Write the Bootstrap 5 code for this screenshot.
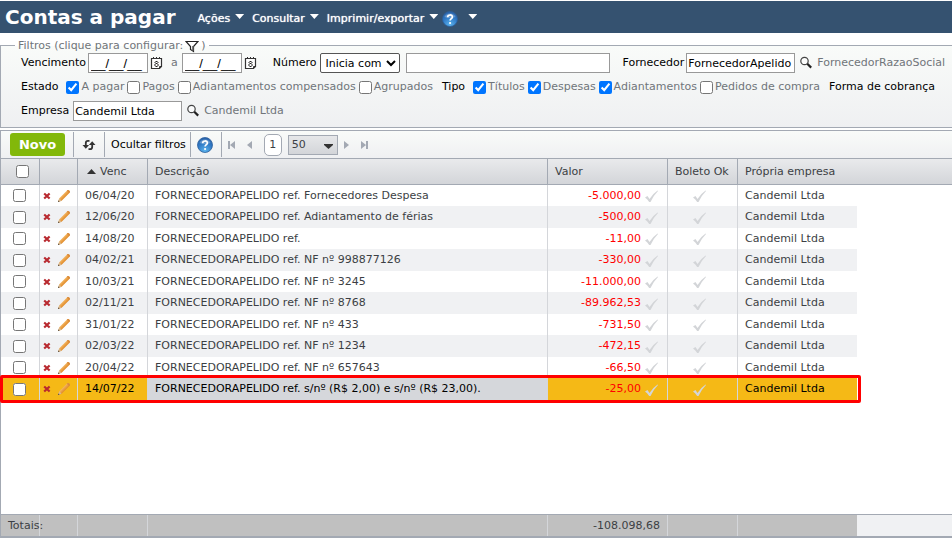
<!DOCTYPE html>
<html lang="pt-BR">
<head>
<meta charset="utf-8">
<meta name="viewport" content="width=device-width, initial-scale=1">
<title>Contas a pagar</title>
<link href="https://cdn.jsdelivr.net/npm/bootstrap@5.3.0/dist/css/bootstrap.min.css" rel="stylesheet">
<style>
:root{--line:#a3a9b3;--soft:#d4d6da;--ink:#3c3f44}
body{font-family:"DejaVu Sans",Verdana,sans-serif;font-size:11px;line-height:14px;color:var(--ink);background:#fff}
svg{display:block;flex:none}
input[type=checkbox]{width:13px;height:13px;margin:0;flex:none;display:block}
.topbar{background:#355270;height:32px;margin-top:1px;padding-left:5px;color:#fff}
.topbar h1{font-size:20px;line-height:28px;font-weight:700;margin:0 22px 0 0}
.menu-item,.plain{background:none;border:0;padding:0;color:inherit;font-size:11px;line-height:14px}
.menu-item{display:flex;align-items:center;gap:5px;margin-right:8px;padding-top:3px;text-shadow:0 0 1px #fff}
.menu-help{gap:10px}
.caret{width:9px;height:5px;background:#fff;clip-path:polygon(0 0,100% 0,50% 100%);margin-bottom:4px}
.filters{margin:4px 0 0;border:1px solid var(--line);border-right:0;padding:0 0 6px 20px;background:linear-gradient(#f9fbf9,#eff0f2);color:#70757a;min-width:0}
.filters legend{float:none;width:auto;margin:0 0 0 -6px;padding:2px 3px 0;font-size:11px;line-height:14px;height:16px}
.caption{color:#000}
.rows{display:flex;flex-direction:column;gap:7px}
.box{height:20px;border:1px solid #999;background:#fff;color:#000;font-size:11px;line-height:14px;padding:0 1px;border-radius:0;flex:none}
.date{width:60px;font-family:"Liberation Sans",Arial,sans-serif;font-size:13px;padding:0 2px}
.name{width:109px}
.number{width:204px}
select.box{width:80px;border-color:#555;border-radius:2px;padding:0}
.opt{display:flex;align-items:center;gap:2px;margin-right:3px}
.g2{margin-left:2px}
.g6{margin-left:6px}
.g12{margin-left:12px}
.grid{margin-top:2px;border-left:1px solid var(--line)}
.tools{height:29px;border-top:1px solid var(--line);border-bottom:1px solid var(--line);background:linear-gradient(#f9fbf9,#eff0f2);color:#000;padding-left:9px}
.novo{background:#82b80a;color:#fff;border:0;border-radius:3px;width:55px;height:23px;font-size:13px;line-height:14px;font-weight:700;padding:0}
.sep{width:1px;height:25px;background:var(--line)}
.page-now{width:18px;height:22px;border:1px solid var(--line);border-radius:5px;background:#fff;color:var(--ink);text-align:center}
.size select{appearance:none;width:50px;height:20px;border:1px solid var(--line);background:linear-gradient(#e6e7e9,#d3d5d9);color:var(--ink);padding:0 3px;border-radius:0;font-size:11px;line-height:14px;display:block}
.size svg{position:absolute;right:5px;top:9px;pointer-events:none}
.ledger{table-layout:fixed;width:100%;border-collapse:separate;border-spacing:0}
.ledger th,.ledger td{padding:0 7px;white-space:nowrap;font-weight:400;vertical-align:middle}
.ledger th{height:26px;border-bottom:1px solid var(--line);border-right:1px solid var(--line);background:linear-gradient(#e9eaec,#d3d5d9)}
.ledger td{height:21px;border-right:1px solid var(--soft)}
.ledger tr:nth-child(even) td{height:22px;background:#f0f1f3}
.ledger th:nth-child(n+7),.ledger td:nth-child(n+7){border-right:0}
.ledger tbody td:last-child{background:none!important}
.ledger .c-pick{padding:0 0 0 12px}
.ledger th.c-pick{padding-left:15px}
.ledger .c-act{padding:0 0 0 3px}
.ledger .c-act span{gap:6px}
.ledger .c-val{padding-right:9px}
.ledger .c-ok{padding-right:14px}
.ledger svg.tick{margin-top:2px}
.minus{color:#f00}
.ledger tr.chosen td{background:#f5b916;color:#000}
.ledger tr.chosen td:nth-child(4){background:#d5d7db}
.chosen{position:relative}
.chosen td:first-child::after{content:"";position:absolute;left:-1px;top:-3px;width:861px;bottom:-3px;border:3px solid #f00;border-radius:2px;pointer-events:none}
.totals{border-top:1px solid var(--line);border-bottom:2px solid var(--line)}
.totals .ledger td{background:#c0c0c0;height:21px}
.totals .ledger td:last-child{background:#f0f1f3!important}
</style>
<script src="https://cdn.jsdelivr.net/npm/bootstrap@5.3.0/dist/js/bootstrap.bundle.min.js"></script>
</head>
<body class="d-flex flex-column min-vh-100 text-nowrap overflow-x-hidden">
<svg width="0" height="0" class="position-absolute" aria-hidden="true">
  <defs>
    <radialGradient id="ball" cx=".5" cy=".9" r=".9"><stop offset="0" stop-color="#5cb4ee"/><stop offset=".6" stop-color="#2f78c4"/><stop offset="1" stop-color="#2a62a8"/></radialGradient>
    <linearGradient id="wood" x1="0" y1="0" x2="1" y2="1"><stop offset=".35" stop-color="#f8c070"/><stop offset=".6" stop-color="#e08a28"/></linearGradient>
  </defs>
  <symbol id="help" viewBox="0 0 16 16"><circle cx="8" cy="8" r="7.5" fill="url(#ball)" stroke="#2c5f9c" stroke-width=".8"/><path d="M2.5 6a5.7 4.8 0 0 1 11 0Q8 8 2.5 6" fill="#fff" opacity=".25"/><path d="M5.6 6.3C5.7 3.2 10.5 3.3 10.4 6c0 1.7-2.3 1.7-2.3 3.6" fill="none" stroke="#fff" stroke-width="1.7"/><circle cx="8.1" cy="12" r="1.1" fill="#fff"/></symbol>
  <symbol id="cal" viewBox="0 0 13 14"><path d="M1.500 2.500h10v8l-2 2h-8z" fill="#fff" stroke="#333" stroke-width="1.200"/><path d="M3.500 1v2M6.500 1v2M9.500 1v2" stroke="#333"/><path d="M11.500 10.500h-2v2" stroke="#333" fill="none"/><path d="M5.500 5h2v1h1v1h-1v1h1v2h-1v1h-2v-1h-1V8h1V7h-1V6h1zM5.500 6v1h2V6zM5.500 8v2h2V8z" fill="#222" fill-rule="evenodd"/></symbol>
  <symbol id="lens" viewBox="0 0 14 14"><circle cx="5.500" cy="5" r="3.700" fill="#fff" fill-opacity=".6" stroke="#444" stroke-width="1.200"/><path d="M8.300 7.700l3.900 3.900" stroke="#222" stroke-width="2.200"/></symbol>
  <symbol id="cross" viewBox="0 0 8 8"><path d="M1.200 1.500l5.400 5M6.600 1.500l-5.400 5" stroke="#b8292f" stroke-width="2.200"/></symbol>
  <symbol id="pencil" viewBox="0 0 14 14"><path d="M1 13l1.300-3.700 8-8q.8-.7 1.700.2l.6.600q.8.900 0 1.700l-8 8z" fill="url(#wood)"/><path d="M1 13l1.300-3.700 2.300 2.500z" fill="#d9b78c"/><path d="M1 13l.5-1.500 1 1z" fill="#333"/><path d="M9.800 1.800l.9-.8q.8-.3 1.500.4.900.8.700 1.700l-.8 1z" fill="#d98a3c"/></symbol>
  <symbol id="tick" viewBox="0 0 13 13"><path d="M0 7.500L2.500 6l2 3Q8 3.500 12.600.5L13 1Q8.500 5.500 5.500 12H4.200Q2.500 9 0 7.500z" fill="#d3d5d8"/></symbol>
</svg>

<nav class="topbar d-flex align-items-center">
  <h1>Contas a pagar</h1>
  <button class="menu-item" type="button">Ações <span class="caret"></span></button>
  <button class="menu-item" type="button">Consultar <span class="caret"></span></button>
  <button class="menu-item me-1" type="button">Imprimir/exportar <span class="caret"></span></button>
  <button class="menu-item menu-help" type="button" aria-label="Ajuda"><svg width="16" height="16"><use href="#help"/></svg><span class="caret"></span></button>
</nav>

<fieldset class="filters">
  <legend class="d-flex align-items-center">Filtros (clique para configurar:
    <svg class="g2" width="14" height="13" viewBox="0 0 14 13"><path d="M1 1.500h12L8.500 6.500v5l-3-2v-3z" fill="#fff" stroke="#222" stroke-width="1.200"/><path d="M7 6v4l1.500 1V6z" fill="#777"/></svg><span class="g2">)</span></legend>
  <div class="rows">
    <div class="d-flex align-items-center">
      <label class="caption" for="d1">Vencimento</label>
      <input class="box date g2" id="d1" value="__/__/__">
      <svg class="g2 me-2" width="13" height="14"><use href="#cal"/></svg>
      <label for="d2">a</label>
      <input class="box date ms-1" id="d2" value="__/__/__">
      <svg class="g2 me-3" width="13" height="14"><use href="#cal"/></svg>
      <label class="caption me-1" for="op">Número</label>
      <select class="box" id="op"><option>Inicia com</option></select>
      <input class="box number g6" aria-label="Número">
      <label class="caption g12" for="forn">Fornecedor</label>
      <input class="box name g2" id="forn" value="FornecedorApelido">
      <svg class="mx-1" width="14" height="14"><use href="#lens"/></svg>
      <span>FornecedorRazaoSocial</span>
    </div>
    <div class="d-flex align-items-center">
      <span class="caption me-2">Estado</span>
      <label class="opt"><input type="checkbox" checked>A pagar</label>
      <label class="opt"><input type="checkbox">Pagos</label>
      <label class="opt"><input type="checkbox">Adiantamentos compensados</label>
      <label class="opt"><input type="checkbox">Agrupados</label>
      <span class="caption g6 me-2">Tipo</span>
      <label class="opt"><input type="checkbox" checked>Títulos</label>
      <label class="opt"><input type="checkbox" checked>Despesas</label>
      <label class="opt"><input type="checkbox" checked>Adiantamentos</label>
      <label class="opt"><input type="checkbox">Pedidos de compra</label>
      <span class="caption g6">Forma de cobrança</span>
    </div>
    <div class="d-flex align-items-center">
      <label class="caption me-1" for="emp">Empresa</label>
      <input class="box name" id="emp" value="Candemil Ltda">
      <svg class="mx-1" width="14" height="14"><use href="#lens"/></svg>
      <span>Candemil Ltda</span>
    </div>
  </div>
</fieldset>

<main class="grid d-flex flex-column flex-grow-1">
  <div class="tools d-flex align-items-center">
    <button class="novo me-2" type="button">Novo</button>
    <span class="sep me-2"></span>
    <button class="plain me-2" type="button" aria-label="Atualizar"><svg width="14" height="14" viewBox="0 0 14 14"><path d="M7.500 2.800H6Q3.800 2.800 3.800 5v3M6.500 11.200H8q2.200 0 2.200-2.200V6" fill="none" stroke="#333" stroke-width="1.800"/><path d="M.5 7h6.600L3.800 10.800zM6.900 7h6.600L10.200 3.200z" fill="#333"/></svg></button>
    <span class="sep"></span>
    <button class="plain g6" type="button">Ocultar filtros</button>
    <span class="sep ms-1"></span>
    <button class="plain g6" type="button" aria-label="Ajuda"><svg width="16" height="16"><use href="#help"/></svg></button>
    <span class="sep ms-2"></span>
    <button class="plain g6" type="button" aria-label="Primeira"><svg width="7" height="8" viewBox="0 0 7 8"><path d="M0 0h2v8H0zM7 0v8L2 4z" fill="#a3a9b3"/></svg></button>
    <button class="plain g12" type="button" aria-label="Anterior"><svg width="5" height="8" viewBox="0 0 5 8"><path d="M5 0v8L0 4z" fill="#a3a9b3"/></svg></button>
    <span class="page-now d-flex align-items-center justify-content-center g12">1</span>
    <span class="size position-relative g6"><select aria-label="Itens por página"><option>50</option></select><svg width="9" height="5" viewBox="0 0 9 5"><path d="M0 0h9v1L4.500 5 0 1z" fill="#333"/></svg></span>
    <button class="plain g6" type="button" aria-label="Próxima"><svg width="5" height="8" viewBox="0 0 5 8"><path d="M0 0v8L5 4z" fill="#a3a9b3"/></svg></button>
    <button class="plain g12" type="button" aria-label="Última"><svg width="7" height="8" viewBox="0 0 7 8"><path d="M5 0h2v8H5zM0 0v8L5 4z" fill="#a3a9b3"/></svg></button>
  </div>
  <table class="ledger">
    <colgroup><col width="39"><col width="38"><col width="70"><col width="400"><col width="120"><col width="70"><col width="119"><col></colgroup>
    <thead><tr>
      <th class="c-pick"><input type="checkbox" aria-label="Selecionar todos"></th><th></th>
      <th><span class="d-flex align-items-center gap-1"><svg class="g2" width="9" height="5" viewBox="0 0 9 5"><path d="M0 5L4.500 0 9 5z" fill="#333"/></svg>Venc</span></th>
      <th>Descrição</th><th>Valor</th><th>Boleto Ok</th><th>Própria empresa</th><th></th>
    </tr></thead>
    <tbody id="bills"></tbody>
  </table>
  <div class="flex-grow-1"></div>
  <div class="totals">
    <table class="ledger">
      <colgroup><col width="39"><col width="38"><col width="70"><col width="400"><col width="120"><col width="70"><col width="119"><col></colgroup>
      <tbody><tr><td>Totais:</td><td></td><td></td><td></td><td class="text-end">-108.098,68</td><td></td><td></td><td></td></tr></tbody>
    </table>
  </div>
</main>
<script>
const bills = [
  ["06/04/20", "Fornecedores Despesa", "-5.000,00"],
  ["12/06/20", "Adiantamento de férias", "-500,00"],
  ["14/08/20", "", "-11,00"],
  ["04/02/21", "NF nº 998877126", "-330,00"],
  ["10/03/21", "NF nº 3245", "-11.000,00"],
  ["02/11/21", "NF nº 8768", "-89.962,53"],
  ["31/01/22", "NF nº 433", "-731,50"],
  ["02/03/22", "NF nº 1234", "-472,15"],
  ["20/04/22", "NF nº 657643", "-66,50"],
  ["14/07/22", "s/nº (R$ 2,00) e s/nº (R$ 23,00).", "-25,00"]
];
document.getElementById("bills").innerHTML = bills.map(([date, ref, value], i) => `
  <tr class="${i === 9 ? "chosen" : ""}">
    <td class="c-pick"><input type="checkbox" aria-label="Selecionar ${date}"></td>
    <td class="c-act"><span class="d-flex align-items-center">
      <button class="plain" type="button" aria-label="Excluir"><svg width="8" height="8"><use href="#cross"/></svg></button>
      <button class="plain" type="button" aria-label="Editar"><svg width="14" height="14"><use href="#pencil"/></svg></button></span></td>
    <td>${date}</td><td>FORNECEDORAPELIDO ref. ${ref}</td>
    <td class="c-val"><span class="d-flex align-items-center justify-content-end gap-1"><span class="minus">${value}</span><svg class="tick" width="13" height="13"><use href="#tick"/></svg></span></td>
    <td class="c-ok"><svg class="tick mx-auto" width="13" height="13"><use href="#tick"/></svg></td>
    <td>Candemil Ltda</td><td></td>
  </tr>`).join("");
</script>
</body>
</html>
